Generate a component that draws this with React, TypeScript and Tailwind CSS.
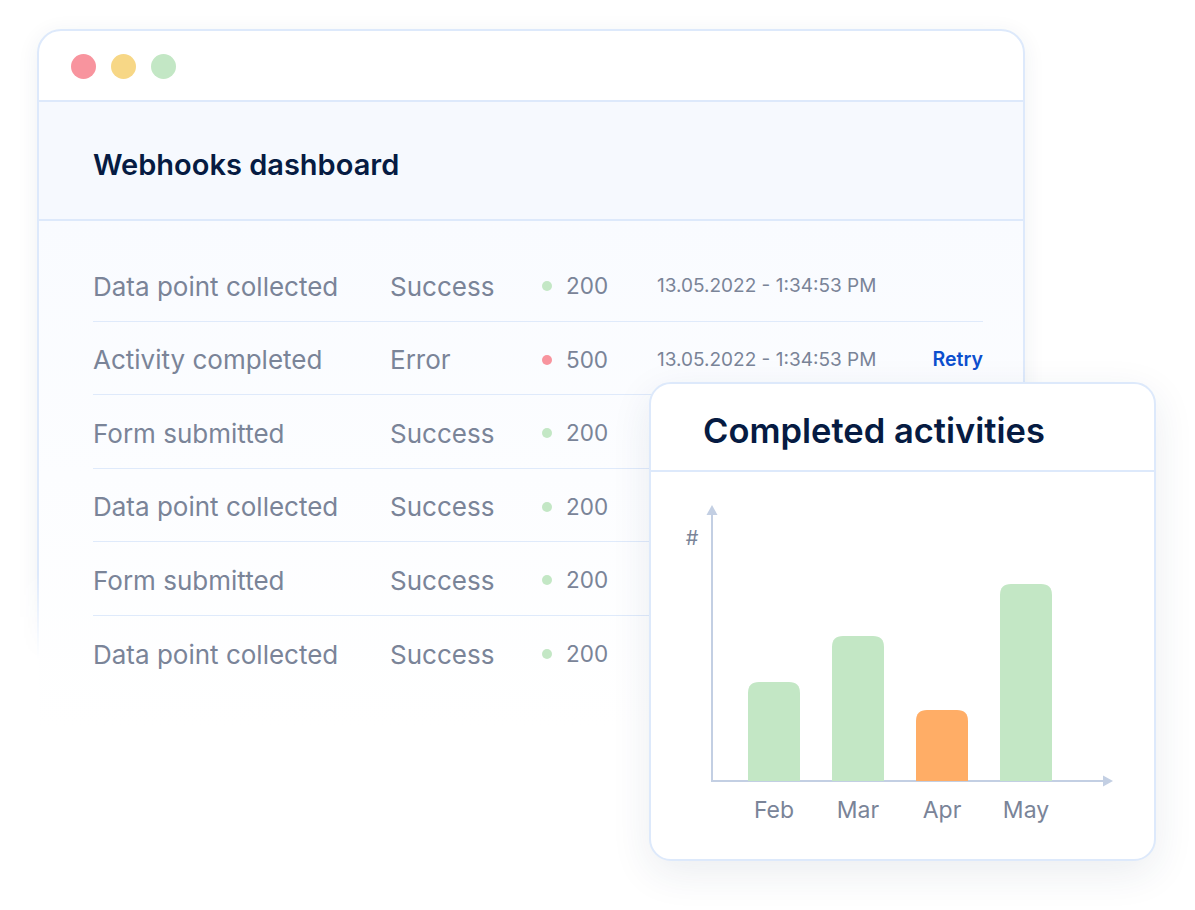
import React from "react";

type Row = { name: string; status: string; code: string; ok: boolean; date: string; retry?: boolean };

const rows: Row[] = [
  { name: "Data point collected", status: "Success", code: "200", ok: true, date: "13.05.2022 - 1:34:53 PM" },
  { name: "Activity completed", status: "Error", code: "500", ok: false, date: "13.05.2022 - 1:34:53 PM", retry: true },
  { name: "Form submitted", status: "Success", code: "200", ok: true, date: "13.05.2022 - 1:34:53 PM" },
  { name: "Data point collected", status: "Success", code: "200", ok: true, date: "13.05.2022 - 1:34:53 PM" },
  { name: "Form submitted", status: "Success", code: "200", ok: true, date: "13.05.2022 - 1:34:53 PM" },
  { name: "Data point collected", status: "Success", code: "200", ok: true, date: "13.05.2022 - 1:34:53 PM" },
];

const bars = [
  { label: "Feb", x: 97, top: 210, color: "#c3e7c5" },
  { label: "Mar", x: 181, top: 164, color: "#c3e7c5" },
  { label: "Apr", x: 265, top: 238, color: "#ffad66" },
  { label: "May", x: 349, top: 112, color: "#c3e7c5" },
];

function barPath(x: number, top: number, w = 52, bottom = 309, r = 11) {
  return `M${x} ${bottom} V${top + r} Q${x} ${top} ${x + r} ${top} H${x + w - r} Q${x + w} ${top} ${x + w} ${top + r} V${bottom} Z`;
}

function WebhookRow({ name, status, code, ok, date, retry, last }: Row & { last: boolean }) {
  return <div className={`flex items-center h-[73.5px] pt-[4px] ${last ? "" : "border-b-[1.5px] border-[#dfeafb]"}`}>
    <div className="w-[297px] text-[26px] text-[#7a8498]">{name}</div>
    <div className="w-[152px] text-[26px] text-[#7a8498]">{status}</div>
    <div className="w-[115px] flex items-center gap-[14px]">
      <span className={`w-[10px] h-[10px] rounded-full ${ok ? "bg-[#c3e7c5]" : "bg-[#f8949e]"}`} />
      <span className="text-[22.5px] text-[#7a8498]">{code}</span>
    </div>
    <div className="flex-1 text-[19px] text-[#7a8498]">{date}</div>
    {retry && <div className="text-[19.5px] font-semibold text-[#0c4fce]">Retry</div>}
  </div>;
}

export default function App() {
  return <div className="relative w-[1195px] h-[910px] bg-white overflow-hidden" style={{ fontFamily: "Inter, 'Noto Sans', sans-serif" }}>
    <div className="relative ml-[37px] mt-[29px] w-[988px]">
      {/* frame: border + shadow, fading out towards the bottom */}
      <div className="absolute -inset-[40px] pointer-events-none [mask-image:linear-gradient(to_bottom,#000_75%,transparent_86%)]">
        <div className="absolute inset-[40px] rounded-[24px] border-2 border-[#dde9fb] bg-white shadow-[0_4px_22px_rgba(30,50,90,0.07)]" />
      </div>

      <div className="relative m-[2px] mb-0">
        <div className="h-[71px] flex items-center gap-[15px] pl-[32px] pt-[3px]">
          <span className="w-[25px] h-[25px] rounded-full bg-[#f8949e]" />
          <span className="w-[25px] h-[25px] rounded-full bg-[#f7d786]" />
          <span className="w-[25px] h-[25px] rounded-full bg-[#c3e7c5]" />
        </div>
        <div className="h-[121px] flex items-center pl-[54px] bg-[#f6f9fe] border-y-2 border-[#dde9fb]">
          <h1 className="text-[29px] font-semibold text-[#061b42] mt-[8px]">Webhooks dashboard</h1>
        </div>
        <div className="pt-[27px] pb-[40px] pl-[54px] pr-[40px] bg-gradient-to-b from-[#f9fbff] to-white">
          {rows.map((r, i) => <WebhookRow key={i} {...r} last={i === rows.length - 1} />)}
        </div>
      </div>
    </div>

    {/* chart card lies over the dashboard window */}
    <div className="absolute left-[649px] top-[382px] w-[507px] h-[479px] rounded-[22px] border-2 border-[#dde9fb] bg-white shadow-[0_12px_40px_rgba(30,50,90,0.09)] flex flex-col">
      <div className="h-[88px] flex items-center pl-[52px] border-b-2 border-[#dde9fb]">
        <h2 className="text-[34.5px] font-semibold text-[#061b42] mt-[7px]">Completed activities</h2>
      </div>
      <svg width="503" height="386" viewBox="0 0 503 386" className="block">
        <line x1="61" y1="40" x2="61" y2="310" stroke="#c3cfe3" strokeWidth="2" />
        <polygon points="61,33 55.5,43 66.5,43" fill="#c3cfe3" />
        <line x1="60" y1="309" x2="454" y2="309" stroke="#c3cfe3" strokeWidth="2" />
        <polygon points="462,309 452,303.5 452,314.5" fill="#c3cfe3" />
        <text x="41" y="73" textAnchor="middle" fontSize="20" fill="#7a8498" fontFamily="Inter, sans-serif">#</text>
        {bars.map(b => <path key={b.label} d={barPath(b.x, b.top)} fill={b.color} />)}
        {bars.map(b => <text key={b.label} x={b.x + 26} y="346" textAnchor="middle" fontSize="23" fill="#7a8498" fontFamily="Inter, sans-serif">{b.label}</text>)}
      </svg>
    </div>
  </div>;
}
